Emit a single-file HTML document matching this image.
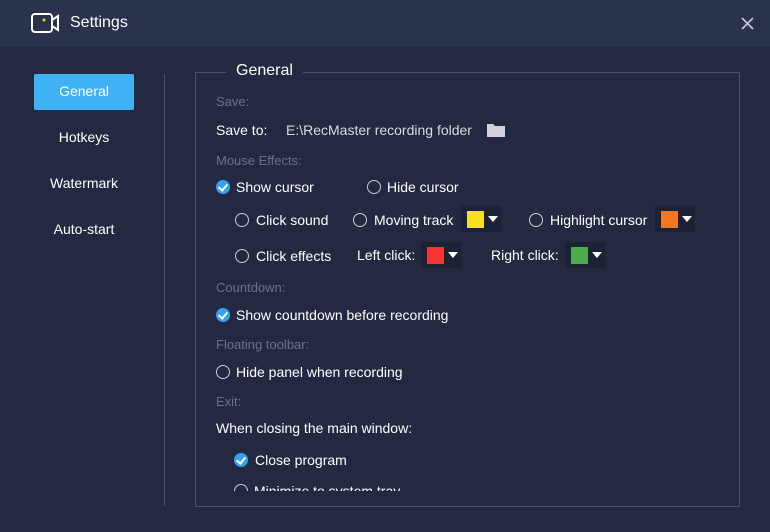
<!DOCTYPE html><html><head><style>
body{margin:0;width:770px;height:532px;background:#222940;font-family:"Liberation Sans",sans-serif;color:#fff;font-size:14px;position:relative;overflow:hidden}
.a{position:absolute;white-space:nowrap}
.hdr{position:absolute;left:0;top:0;width:770px;height:47px;background:#2b334c}
.g{color:#6b7287}
.r{position:absolute;width:12px;height:12px;border:1px solid #c8ccd6;border-radius:50%}
.c{position:absolute;width:14px;height:14px;border-radius:50%;background:#2fa3ef}
.c:after{content:"";position:absolute;left:4px;top:2px;width:4px;height:7px;border:solid #fff;border-width:0 2px 2px 0;transform:rotate(40deg)}
.sw{position:absolute;width:40px;height:26px;background:#1c2235}
.sw i{position:absolute;left:6px;top:5px;width:17px;height:17px}
.sw b{position:absolute;left:27px;top:10px;border:5px solid transparent;border-top:6px solid #fff;border-bottom:0}
</style></head><body>
<div class="hdr"></div>
<svg class="a" style="left:31px;top:12px" width="30" height="22" viewBox="0 0 30 22"><rect x="1" y="2" width="20" height="18" rx="3" fill="none" stroke="#fff" stroke-width="2"/><path d="M21 8l6-4v14l-6-4" fill="none" stroke="#fff" stroke-width="2"/><circle cx="13" cy="8" r="1.5" fill="#f5d000"/></svg>
<div class="a" style="left:70px;top:14px;font-size:16px">Settings</div>
<svg class="a" style="left:741px;top:17px" width="13" height="13"><path d="M1 1L12 12M12 1L1 12" stroke="#c5c9d4" stroke-width="1.6"/></svg>
<div class="a" style="left:34px;top:74px;width:100px;height:36px;background:#3fb2f5;border-radius:2px"></div>
<div class="a" style="left:34px;top:83px;width:100px;text-align:center">General</div>
<div class="a" style="left:34px;top:129px;width:100px;text-align:center">Hotkeys</div>
<div class="a" style="left:34px;top:175px;width:100px;text-align:center">Watermark</div>
<div class="a" style="left:34px;top:221px;width:100px;text-align:center">Auto-start</div>
<div class="a" style="left:164px;top:74px;width:1px;height:432px;background:#4a5168"></div>
<div class="a" style="left:195px;top:72px;width:543px;height:433px;border:1px solid #4a5168"></div>
<div class="a" style="left:226px;top:62px;padding:0 10px;background:#222940;font-size:16px">General</div>
<div class="a g" style="left:216px;top:94px;font-size:13px">Save:</div>
<div class="a" style="left:216px;top:122px">Save to:</div>
<div class="a" style="left:286px;top:122px;color:#d8dbe2">E:\RecMaster recording folder</div>
<svg class="a" style="left:487px;top:123px" width="18" height="14"><path d="M0 1h6l2 2h10v11H0z" fill="#d0d3da"/></svg>
<div class="a g" style="left:216px;top:153px;font-size:13px">Mouse Effects:</div>
<div class="c" style="left:216px;top:180px"></div><div class="a" style="left:236px;top:179px">Show cursor</div>
<div class="r" style="left:367px;top:180px"></div><div class="a" style="left:387px;top:179px">Hide cursor</div>
<div class="r" style="left:235px;top:213px"></div><div class="a" style="left:256px;top:212px">Click sound</div>
<div class="r" style="left:353px;top:213px"></div><div class="a" style="left:374px;top:212px">Moving track</div>
<div class="sw" style="left:461px;top:206px"><i style="background:#f5e21f"></i><b></b></div>
<div class="r" style="left:529px;top:213px"></div><div class="a" style="left:550px;top:212px">Highlight cursor</div>
<div class="sw" style="left:655px;top:206px"><i style="background:#f5771f"></i><b></b></div>
<div class="r" style="left:235px;top:249px"></div><div class="a" style="left:256px;top:248px">Click effects</div>
<div class="a" style="left:357px;top:247px">Left click:</div>
<div class="sw" style="left:421px;top:242px"><i style="background:#f53434"></i><b></b></div>
<div class="a" style="left:491px;top:247px">Right click:</div>
<div class="sw" style="left:565px;top:242px"><i style="background:#4cad4c"></i><b></b></div>
<div class="a g" style="left:216px;top:280px;font-size:13px">Countdown:</div>
<div class="c" style="left:216px;top:308px"></div><div class="a" style="left:236px;top:307px">Show countdown before recording</div>
<div class="a g" style="left:216px;top:337px;font-size:13px">Floating toolbar:</div>
<div class="r" style="left:216px;top:365px"></div><div class="a" style="left:236px;top:364px">Hide panel when recording</div>
<div class="a g" style="left:216px;top:394px;font-size:13px">Exit:</div>
<div class="a" style="left:216px;top:420px">When closing the main window:</div>
<div class="c" style="left:234px;top:453px"></div><div class="a" style="left:255px;top:452px">Close program</div>
<div class="a" style="left:196px;top:482px;width:540px;height:9px;overflow:hidden"><div class="r" style="left:38px;top:2px"></div><div class="a" style="left:58px;top:1px">Minimize to system tray</div></div>
</body></html>
